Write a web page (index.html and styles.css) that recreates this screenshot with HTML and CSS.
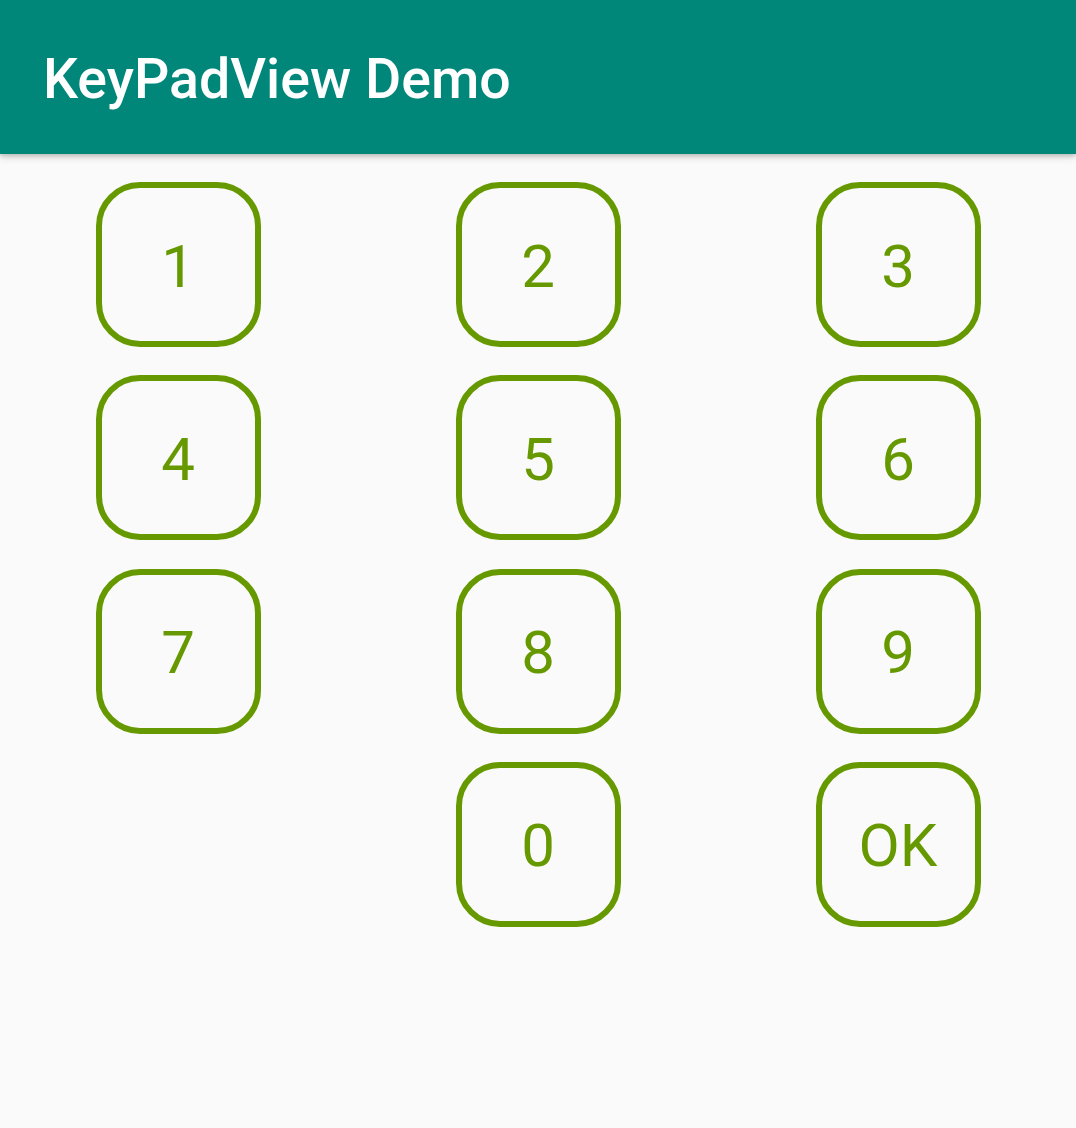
FILE: index.html
```html
<!DOCTYPE html>
<html>
<head>
<meta charset="utf-8">
<link rel="stylesheet" href="styles.css">
</head>
<body>
<header class="appbar"><h1 class="title">KeyPadView Demo</h1></header>
<main class="keypad">
  <div class="cell"><div class="key">1</div></div>
  <div class="cell"><div class="key">2</div></div>
  <div class="cell"><div class="key">3</div></div>
  <div class="cell"><div class="key">4</div></div>
  <div class="cell"><div class="key">5</div></div>
  <div class="cell"><div class="key">6</div></div>
  <div class="cell"><div class="key">7</div></div>
  <div class="cell"><div class="key">8</div></div>
  <div class="cell"><div class="key">9</div></div>
  <div class="cell"></div>
  <div class="cell"><div class="key">0</div></div>
  <div class="cell"><div class="key">OK</div></div>
</main>
</body>
</html>
```
FILE: styles.css
```css
html, body {
  margin: 0;
  padding: 0;
  background: #fafafa;
  font-family: Roboto, "Noto Sans", sans-serif;
}
body {
  width: 1076px;
  height: 1128px;
  overflow: hidden;
}
.appbar {
  box-sizing: border-box;
  height: 154px;
  background: #00877a;
  box-shadow: 0 2px 4px rgba(0,0,0,0.18), 0 4px 8px rgba(0,0,0,0.10);
  display: flex;
  align-items: center;
  padding-left: 43px;
  padding-top: 6px;
  position: relative;
  z-index: 1;
}
.title {
  margin: 0;
  color: #ffffff;
  font-weight: 500;
  font-size: 55.5px;
  line-height: 1;
  letter-spacing: 0;
}
.keypad {
  display: grid;
  grid-template-columns: repeat(3, 360px);
  row-gap: 28.33px;
  margin: 0 -2px;
  padding-top: 28px;
}
.cell {
  display: flex;
  justify-content: center;
  height: 165px;
}
.key {
  box-sizing: border-box;
  width: 165px;
  height: 165px;
  border: 6px solid #669900;
  border-radius: 44px;
  display: flex;
  align-items: center;
  justify-content: center;
  color: #669900;
  font-size: 60px;
  font-weight: 400;
  line-height: 1;
  padding-top: 4px;
}
```
